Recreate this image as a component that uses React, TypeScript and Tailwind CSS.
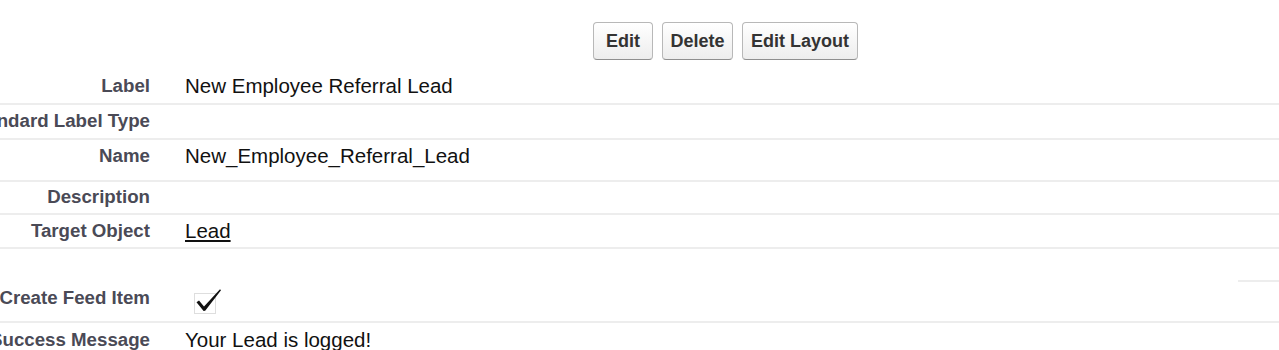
import React from "react";

const font = { fontFamily: '"Liberation Sans", Arial, Helvetica, sans-serif' };

function Row({
  label,
  children,
  h,
  extra = "",
  labelExtra = "",
  border = true,
}: {
  label: string;
  children?: React.ReactNode;
  h: string;
  extra?: string;
  labelExtra?: string;
  border?: boolean;
}) {
  return (
    <div className={`flex items-center ${h} ${extra} ${border ? "border-b-2 border-[#ededed]" : ""}`}>
      <div className={`w-[150px] shrink-0 flex justify-end ${labelExtra}`}>
        <span className="whitespace-nowrap text-[18.7px] font-bold leading-none text-[#4a4a56]">{label}</span>
      </div>
      <div className="ml-[35px] flex items-center text-[20.5px] leading-none text-[#111]">{children}</div>
    </div>
  );
}

function Btn({ children, w }: { children: React.ReactNode; w: string }) {
  return (
    <button
      className={`${w} h-[38px] rounded-[4px] border border-[#b8b8b8] border-b-[#8f8f8f] bg-gradient-to-b from-white to-[#ededed] text-[18px] font-bold leading-none text-[#333]`}
    >
      {children}
    </button>
  );
}

export default function App() {
  return (
    <div className="w-[1279px] h-[350px] overflow-hidden bg-white" style={font}>
      <div className="flex justify-center gap-[9px] pl-[172px] pt-[22px]">
        <Btn w="w-[60px]">Edit</Btn>
        <Btn w="w-[71px]">Delete</Btn>
        <Btn w="w-[116px]">Edit Layout</Btn>
      </div>
      <div className="mt-[9px]">
        <Row label="Label" h="h-[36px]">New Employee Referral Lead</Row>
        <Row label="Standard Label Type" h="h-[35px]" />
        <Row label="Name" h="h-[42px]" extra="pb-[8px]">New_Employee_Referral_Lead</Row>
        <Row label="Description" h="h-[33px]" />
        <Row label="Target Object" h="h-[34px]">
          <span className="underline underline-offset-[2px]">Lead</span>
        </Row>
        <div className="flex h-[33px] items-end justify-end">
          <div className="h-[2px] w-[41px] bg-[#ededed]" />
        </div>
        <Row label="Create Feed Item" h="h-[41px]" labelExtra="pb-[6px]">
          <svg width="28" height="26" viewBox="0 0 28 26" className="ml-[9px]">
            <rect x="0.5" y="4.5" width="21" height="20" fill="none" stroke="#bdbdbd" strokeWidth="1" strokeDasharray="1 1" />
            <path d="M2.5 13.2 L5 11.6 L10 17.6 L26 0.2 L27 1.2 L11.2 21.8 L9.6 22 Z" fill="#111" />
          </svg>
        </Row>
        <Row label="Success Message" h="h-[34px]" border={false}>Your Lead is logged!</Row>
      </div>
    </div>
  );
}
